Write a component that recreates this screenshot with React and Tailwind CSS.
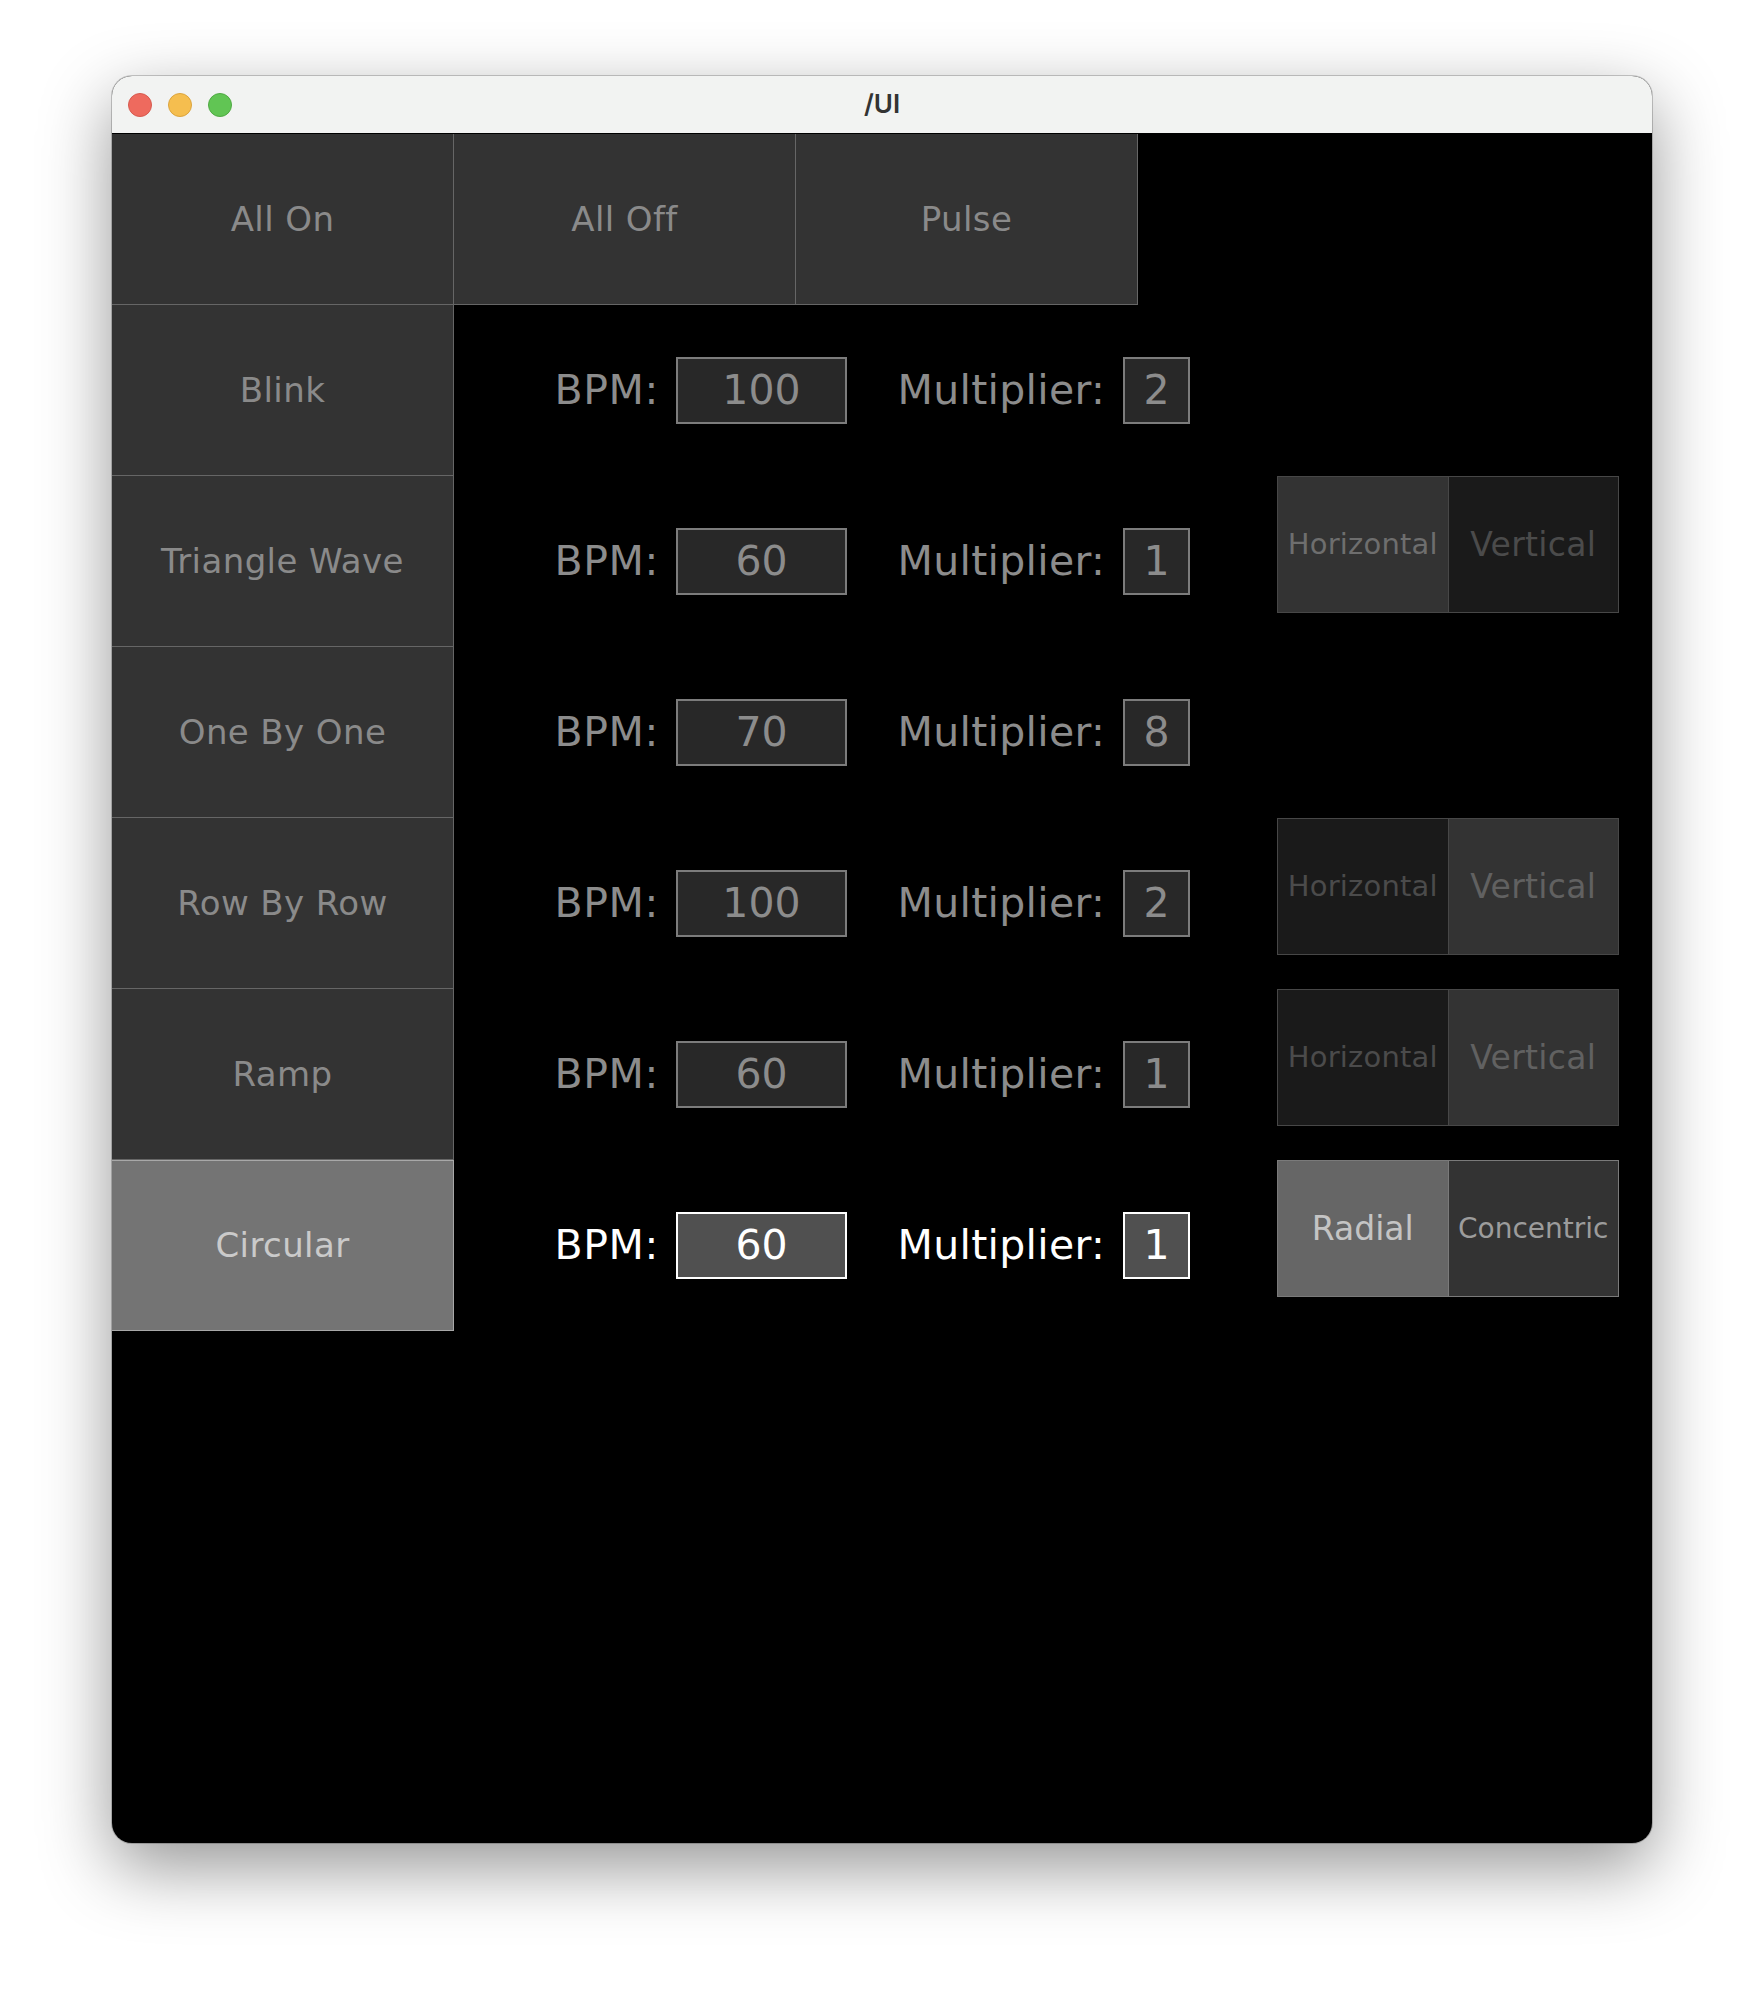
const FONT = { fontFamily: '"DejaVu Sans", Verdana, sans-serif' };

const topButtons = ["All On", "All Off", "Pulse"];

const rows = [
  { name: "Blink", bpm: "100", mult: "2" },
  { name: "Triangle Wave", bpm: "60", mult: "1", toggle: { a: "Horizontal", b: "Vertical", sel: "a" } },
  { name: "One By One", bpm: "70", mult: "8" },
  { name: "Row By Row", bpm: "100", mult: "2", toggle: { a: "Horizontal", b: "Vertical", sel: "b" } },
  { name: "Ramp", bpm: "60", mult: "1", toggle: { a: "Horizontal", b: "Vertical", sel: "b" } },
  { name: "Circular", bpm: "60", mult: "1", active: true, toggle: { a: "Radial", b: "Concentric", sel: "a" } },
];

function PatternButton({ label, active, className = "" }) {
  return (
    <div
      className={`w-[342px] h-[171px] shrink-0 flex items-center justify-center text-[34px] tracking-[0.4px] border-r border-b ${
        active
          ? "bg-[#747474] text-[#cacaca] border-[#a8a8a8] border-t"
          : "bg-[#333333] text-[#8a8a8a] border-[#666666]"
      } ${className}`}
    >
      {label}
    </div>
  );
}

function Toggle({ toggle, active }) {
  const sizeA = toggle.a === "Horizontal" ? "text-[29px] tracking-[0.2px]" : "text-[33px]";
  const sizeB = toggle.b === "Concentric" ? "text-[28px]" : "text-[33px] tracking-[0.3px]";
  let a, b;
  if (active) {
    a = "bg-[#666666] text-[#c4c4c4]";
    b = "bg-[#333333] text-[#9c9c9c]";
  } else if (toggle.sel === "a") {
    a = "bg-[#333333] text-[#6e6e6e]";
    b = "bg-[#1a1a1a] text-[#4b4b4b]";
  } else {
    a = "bg-[#1a1a1a] text-[#4b4b4b]";
    b = "bg-[#333333] text-[#616161]";
  }
  return (
    <div
      className={`self-start ml-[87px] flex h-[137px] w-[342px] border ${
        active ? "border-[#7a7a7a]" : "border-[#474747]"
      }`}
    >
      <div className={`flex-1 flex items-center justify-center border-r ${active ? "border-[#7a7a7a]" : "border-[#474747]"} ${a} ${sizeA}`}>
        {toggle.a}
      </div>
      <div className={`flex-1 flex items-center justify-center ${b} ${sizeB}`}>{toggle.b}</div>
    </div>
  );
}

function ControlRow({ row }) {
  const label = row.active ? "text-white" : "text-[#8c8c8c]";
  const box = row.active
    ? "bg-[#505050] border-white text-white"
    : "bg-[#282828] border-[#7c7c7c] text-[#8c8c8c]";
  return (
    <div className="flex items-center h-[171px]">
      <PatternButton label={row.name} active={row.active} className="border-l-0" />
      <div className={`w-[205px] text-right text-[41px] tracking-[0.6px] ${label}`}>BPM:</div>
      <div className={`ml-[17px] w-[171px] h-[67px] border-2 flex items-center justify-center text-[41px] ${box}`}>
        {row.bpm}
      </div>
      <div className={`w-[258px] text-right text-[41px] tracking-[0.3px] ${label}`}>Multiplier:</div>
      <div className={`ml-[18px] w-[67px] h-[67px] border-2 flex items-center justify-center text-[41px] ${box}`}>
        {row.mult}
      </div>
      {row.toggle && <Toggle toggle={row.toggle} active={row.active} />}
    </div>
  );
}

export default function App() {
  return (
    <div className="w-[1764px] h-[1992px] bg-white pt-[76px] pl-[112px]" style={FONT}>
      <div className="w-[1540px] h-[1767px] rounded-[20px] overflow-hidden flex flex-col bg-black shadow-[0_24px_70px_rgba(0,0,0,0.42)] ring-1 ring-black/20">
        {/* title bar */}
        <div className="relative h-[58px] shrink-0 bg-[#f2f3f2] border-b border-black flex items-center pl-[16px] gap-[16px]">
          <span className="w-[24px] h-[24px] rounded-full bg-[#ee6a5e] border border-[#d65a4f]" />
          <span className="w-[24px] h-[24px] rounded-full bg-[#f5be4f] border border-[#dba43e]" />
          <span className="w-[24px] h-[24px] rounded-full bg-[#61c554] border border-[#50a944]" />
          <div
            className="absolute inset-0 flex items-center justify-center text-[26px] font-semibold text-[#333333] pb-[2px]"
            style={{ fontFamily: 'Inter, "Liberation Sans", sans-serif' }}
          >
            /UI
          </div>
        </div>

        {/* content */}
        <div className="flex-1 flex flex-col">
          <div className="flex">
            {topButtons.map((b) => (
              <PatternButton key={b} label={b} />
            ))}
          </div>
          {rows.map((r) => (
            <ControlRow key={r.name} row={r} />
          ))}
        </div>
      </div>
    </div>
  );
}
